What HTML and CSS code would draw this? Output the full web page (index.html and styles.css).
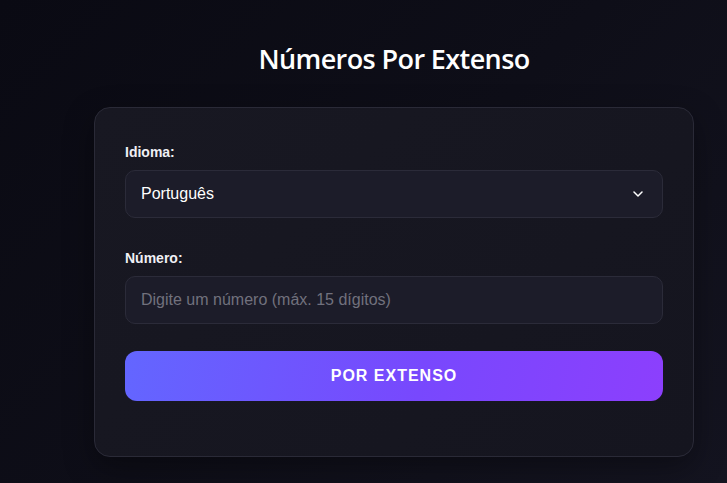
FILE: index.html
```html
<!DOCTYPE html>
<html lang="pt">
<head>
<meta charset="utf-8">
<title>Números Por Extenso</title>
<link rel="stylesheet" href="styles.css">
</head>
<body>
<main class="page">
  <h1 class="title">Números Por Extenso</h1>
  <section class="card">
    <div class="group">
      <label class="label" for="lang">Idioma:</label>
      <div class="select">
        <span class="select-value">Português</span>
        <svg class="chevron" width="10" height="6" viewBox="0 0 10 6" aria-hidden="true"><path d="M1 1l4 4 4-4" fill="none" stroke="#fff" stroke-width="1.5" stroke-linecap="round" stroke-linejoin="round"/></svg>
      </div>
    </div>
    <div class="group">
      <label class="label" for="num">Número:</label>
      <input class="input" id="num" type="text" placeholder="Digite um número (máx. 15 dígitos)">
    </div>
    <button class="button" type="button">POR EXTENSO</button>
  </section>
</main>
</body>
</html>
```

FILE: styles.css
```css
html, body {
  margin: 0;
  height: 100%;
}
body {
  background: linear-gradient(135deg, #0a0a13 0%, #0e0e18 50%, #141420 100%);
  font-family: "Liberation Sans", Arial, sans-serif;
  color: #f2f2f7;
}
.page {
  width: 600px;
  margin-left: 94px;
  padding-top: 40px;
}
.title {
  margin: 0 0 29px;
  text-align: center;
  font-family: "Open Sans", "Noto Sans", sans-serif;
  font-weight: 600;
  font-size: 27px;
  letter-spacing: -0.6px;
  line-height: 38px;
  color: #ffffff;
}
.card {
  box-sizing: border-box;
  border: 1px solid #2a2a37;
  border-radius: 16px;
  background: linear-gradient(135deg, #181822 0%, #15151f 100%);
  padding: 34px 30px 55px;
  box-shadow: 0 10px 30px rgba(0,0,0,0.35);
}
.group {
  display: flex;
  flex-direction: column;
  margin-bottom: 30px;
}
.group + .group {
  margin-bottom: 27px;
}
.label {
  font-weight: 700;
  font-size: 14px;
  line-height: 20px;
  margin-bottom: 8px;
  color: #f0f0f5;
}
.select, .input {
  box-sizing: border-box;
  height: 48px;
  border: 1px solid #2b2b39;
  border-radius: 10px;
  background: #1c1c29;
  font-family: "Liberation Sans", Arial, sans-serif;
  font-size: 16px;
  padding: 0 15px;
}
.select {
  display: flex;
  align-items: center;
  justify-content: space-between;
  color: #ffffff;
  padding-right: 19px;
}
.chevron {
  display: block;
}
.input {
  width: 100%;
  color: #ffffff;
  outline: none;
}
.input::placeholder {
  color: #71717d;
}
.button {
  display: block;
  width: 100%;
  height: 50px;
  border: 0;
  border-radius: 12px;
  background: linear-gradient(100deg, #6366ff 0%, #7848fd 55%, #8c3ffd 100%);
  color: #ffffff;
  font-family: "Liberation Sans", Arial, sans-serif;
  font-weight: 700;
  font-size: 16px;
  letter-spacing: 1px;
  cursor: pointer;
}
```
